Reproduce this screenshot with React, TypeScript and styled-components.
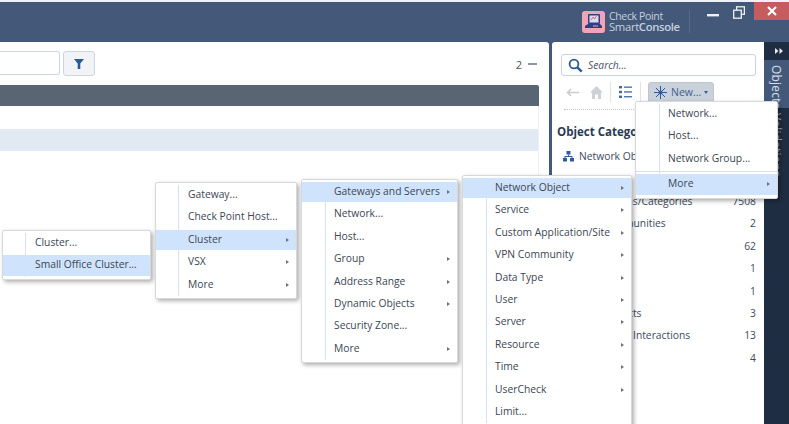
import styled, { createGlobalStyle } from "styled-components";

const GlobalStyle = createGlobalStyle`
  html, body {
    margin: 0;
    padding: 0;
    width: 789px;
    height: 424px;
    overflow: hidden;
    background: #44597a;
  }
  * { box-sizing: border-box; }
`;

const Page = styled.div`
  position: relative;
  width: 789px;
  height: 424px;
  overflow: hidden;
  display: flex;
  flex-direction: column;
  font-family: "Open Sans", "Liberation Sans", sans-serif;
  font-size: 10.3px;
  color: #3c4654;
  background: #44597a;
  border-top: 2px solid #eef1f5;
`;

const TitleBar = styled.header`
  height: 40px;
  flex: none;
  display: flex;
  align-items: flex-start;
  justify-content: flex-end;
`;

const Logo = styled.div`
  display: flex;
  align-items: center;
  gap: 4px;
  height: 23px;
  margin-top: 8px;
  padding-right: 8px;
  border-right: 1px solid #566a8a;
`;

const LogoBadge = styled.div`
  width: 23px;
  height: 22px;
  border-radius: 3px;
  background: #f3a3b6;
  display: flex;
  align-items: center;
  justify-content: center;
`;

const LogoText = styled.div`
  display: flex;
  flex-direction: column;
  width: 72px;
  color: #c6d0de;
  line-height: 10.5px;
  font-size: 10.5px;
  letter-spacing: -0.35px;
  b { font-weight: 600; }
  span:last-child { font-size: 11.3px; }
`;

const WindowButton = styled.button<{ $width: number; $danger?: boolean; $shift?: number }>`
  width: ${(p) => p.$width}px;
  height: 18px;
  padding: ${(p) => p.$shift ?? 0}px 0 0;
  border: 0;
  display: flex;
  align-items: center;
  justify-content: center;
  background: ${(p) => (p.$danger ? "#c55c5e" : "transparent")};
`;

const WindowButtons = styled.div`
  display: flex;
  margin-left: 11px;
`;

const Body = styled.div`
  flex: 1;
  min-height: 0;
  display: flex;
`;

const Main = styled.main`
  width: 549px;
  flex: none;
  background: #fff;
  border-top-right-radius: 3px;
  display: flex;
  flex-direction: column;
`;

const FilterRow = styled.div`
  height: 43px;
  flex: none;
  display: flex;
  align-items: flex-start;
  padding-top: 9px;
  gap: 3px;
`;

const FilterInput = styled.div`
  width: 60px;
  height: 24px;
  border: 1px solid #cfd6df;
  border-left: 0;
  border-radius: 0 3px 3px 0;
`;

const FilterButton = styled.button`
  width: 32px;
  height: 25px;
  padding: 0;
  background: #f1f3f7;
  border: 1px solid #cdd5df;
  border-radius: 3px;
  display: flex;
  align-items: center;
  justify-content: center;
`;

const Counter = styled.div`
  margin-left: auto;
  margin-right: 12px;
  display: flex;
  align-items: center;
  gap: 6px;
  height: 26px;
  font-size: 11px;
  color: #4a5362;
  &::after {
    content: "";
    width: 9px;
    height: 2px;
    background: #8d95a1;
  }
`;

const TableHeader = styled.div`
  height: 21px;
  width: 539px;
  flex: none;
  background: #5a6574;
  border-top-right-radius: 2px;
`;

const TableBody = styled.div`
  width: 539px;
  flex: 1;
  padding-top: 23px;
  border-right: 1px solid #eceff3;
`;

const TableRow = styled.div`
  height: 22px;
  background: #e1e9f3;
`;

const Panel = styled.aside`
  width: 212px;
  margin-left: 3px;
  flex: none;
  background: #fff;
  border-top-left-radius: 3px;
  padding: 12px 8px 0 5px;
  display: flex;
  flex-direction: column;
`;

const SearchBox = styled.div`
  height: 22px;
  margin-left: 4px;
  flex: none;
  border: 1px solid #c9d2dd;
  border-radius: 3px;
  display: flex;
  align-items: center;
  gap: 5px;
  padding-left: 6px;
  font-style: italic;
  color: #4b5563;
`;

const Toolbar = styled.div`
  height: 22px;
  margin-top: 5px;
  margin-left: 9px;
  flex: none;
  display: flex;
  align-items: center;
`;

const ToolDivider = styled.span<{ $left: number; $right: number }>`
  width: 1px;
  height: 20px;
  background: #dfe3e8;
  margin: 0 ${(p) => p.$right}px 0 ${(p) => p.$left}px;
`;

const NewButton = styled.div`
  width: 66px;
  height: 21px;
  background: #c9d1da;
  border: 1px solid #bcc5d0;
  border-radius: 3px;
  display: flex;
  align-items: center;
  gap: 4px;
  padding-left: 5px;
  color: #3e5f8e;
  font-size: 10.5px;
  &::after {
    content: "";
    border-left: 2.5px solid transparent;
    border-right: 2.5px solid transparent;
    border-top: 3px solid #3e5f8e;
    margin-left: -1px;
  }
`;

const DottedRule = styled.div`
  margin: 6px 0 0 7px;
  flex: none;
  border-top: 1px dotted #bcc3cc;
`;

const CategoryHeading = styled.h3`
  margin: 14px 0 0;
  font-size: 11.5px;
  line-height: 16px;
  font-weight: 700;
  color: #2a3a55;
  white-space: nowrap;
`;

const CategoryList = styled.ul`
  list-style: none;
  margin: 5px 0 0;
  padding: 0;
`;

const CategoryRow = styled.li`
  height: 22.4px;
  display: flex;
  align-items: center;
  gap: 5px;
  padding-left: 6px;
  white-space: nowrap;
  color: #3d4a60;
  span:last-child { margin-left: auto; }
`;

const CategoryIcon = styled.span`
  width: 11px;
  height: 11px;
  flex: none;
  display: flex;
`;

const SideRail = styled.div`
  width: 25px;
  flex: none;
  background: #1f2d42;
  display: flex;
  flex-direction: column;
  align-items: stretch;
`;

const RailToggle = styled.div`
  height: 18px;
  flex: none;
  display: flex;
  align-items: center;
  justify-content: center;
  padding-left: 5px;
  color: #e5eaf0;
`;

const RailTab = styled.div<{ $active?: boolean }>`
  writing-mode: vertical-rl;
  flex: none;
  height: ${(p) => (p.$active ? 48 : 70)}px;
  padding: 5px 0 0 0;
  display: flex;
  align-items: center;
  background: ${(p) => (p.$active ? "#44597a" : "transparent")};
  color: ${(p) => (p.$active ? "#d9e0ea" : "#9aa7b8")};
  font-size: 12px;
  letter-spacing: 0.2px;
`;

const Menu = styled.div<{ $left: number; $top: number; $width: number; $gutter?: number }>`
  position: absolute;
  left: ${(p) => p.$left}px;
  top: ${(p) => p.$top}px;
  width: ${(p) => p.$width}px;
  padding: 2px 0 3px;
  background: #fff;
  border: 1px solid #d6d8db;
  border-radius: 2px;
  box-shadow: 2px 2px 4px rgba(0, 0, 0, 0.32);
  &::before {
    content: "";
    position: absolute;
    left: ${(p) => p.$gutter ?? 22}px;
    top: 2px;
    bottom: 2px;
    width: 1px;
    background: #d7e1f0;
  }
`;

const MenuItem = styled.div<{ $active?: boolean; $more?: boolean }>`
  position: relative;
  height: 20.4px;
  margin-bottom: 2px;
  padding-left: 32px;
  line-height: 19px;
  white-space: nowrap;
  color: #3c4654;
  background: ${(p) => (p.$active ? "#cfe4fc" : "transparent")};
  &:last-child { margin-bottom: 0; }
  &::after {
    content: "";
    display: ${(p) => (p.$more ? "block" : "none")};
    position: absolute;
    right: 7px;
    top: 8px;
    border-top: 2.5px solid transparent;
    border-bottom: 2.5px solid transparent;
    border-left: 3px solid #6b7280;
  }
`;

const MenuSeparator = styled.div`
  height: 1px;
  margin: 0 0 2px;
  background: #dcdfe3;
`;

type Entry = { label: string; more?: boolean; active?: boolean };

const level1: Entry[] = [
  { label: "Cluster..." },
  { label: "Small Office Cluster...", active: true },
];

const level2: Entry[] = [
  { label: "Gateway..." },
  { label: "Check Point Host..." },
  { label: "Cluster", more: true, active: true },
  { label: "VSX", more: true },
  { label: "More", more: true },
];

const level3: Entry[] = [
  { label: "Gateways and Servers", more: true, active: true },
  { label: "Network..." },
  { label: "Host..." },
  { label: "Group", more: true },
  { label: "Address Range", more: true },
  { label: "Dynamic Objects", more: true },
  { label: "Security Zone..." },
  { label: "More", more: true },
];

const level4: Entry[] = [
  { label: "Network Object", more: true, active: true },
  { label: "Service", more: true },
  { label: "Custom Application/Site", more: true },
  { label: "VPN Community", more: true },
  { label: "Data Type", more: true },
  { label: "User", more: true },
  { label: "Server", more: true },
  { label: "Resource", more: true },
  { label: "Time", more: true },
  { label: "UserCheck", more: true },
  { label: "Limit..." },
];

const level5: Entry[] = [
  { label: "Network..." },
  { label: "Host..." },
  { label: "Network Group..." },
];

const categories = [
  { label: "Network Objects", count: "" },
  { label: "Services", count: "" },
  { label: "Applications/Categories", count: "7508" },
  { label: "VPN Communities", count: "2" },
  { label: "Data Type", count: "62" },
  { label: "Users", count: "1" },
  { label: "Servers", count: "1" },
  { label: "Time Objects", count: "3" },
  { label: "UserCheck Interactions", count: "13" },
  { label: "Limits", count: "4" },
];

function renderItems(items: Entry[]) {
  return items.map((item) => (
    <MenuItem key={item.label} $active={item.active} $more={item.more}>
      {item.label}
    </MenuItem>
  ));
}

function ComputerIcon() {
  return (
    <svg width="19" height="18" viewBox="0 0 19 18">
      <rect x="4" y="1" width="12" height="10" rx="1" fill="#2f3f86" />
      <rect x="5.5" y="2.5" width="9" height="7" fill="#d9dcf2" />
      <path d="M7 7l2-3 1.5 2 2-3" stroke="#d0526e" strokeWidth="0.8" fill="none" />
      <path d="M1 13l3-2h12l2 2v2H1z" fill="#2f3f86" />
      <rect x="9" y="12.5" width="5" height="1" fill="#f3a3b6" />
    </svg>
  );
}

function NetworkIcon() {
  return (
    <svg width="11" height="11" viewBox="0 0 11 11" fill="#2e5c96">
      <rect x="3.5" y="0" width="4" height="3.5" />
      <rect x="0" y="7" width="4" height="3.5" />
      <rect x="7" y="7" width="4" height="3.5" />
      <path d="M5 3.5h1V5h3.5v2h-1V6h-6v1h-1V5H5z" />
    </svg>
  );
}

export default function App() {
  return (
    <Page>
      <GlobalStyle />
      <TitleBar>
        <Logo>
          <LogoBadge>
            <ComputerIcon />
          </LogoBadge>
          <LogoText>
            <span>Check Point</span>
            <span>
              Smart<b>Console</b>
            </span>
          </LogoText>
        </Logo>
        <WindowButtons>
          <WindowButton $width={23}>
            <svg width="12" height="3" viewBox="0 0 12 3" style={{ marginTop: 9 }}>
              <rect width="12" height="2.4" fill="#eef2f6" />
            </svg>
          </WindowButton>
          <WindowButton $width={30} $shift={3}>
            <svg width="12" height="13" viewBox="0 0 12 13" fill="none" stroke="#eef2f6" strokeWidth="1.3">
              <rect x="3.6" y="0.8" width="7.8" height="7.5" />
              <rect x="0.7" y="4.2" width="7.6" height="8" fill="#44597a" />
            </svg>
          </WindowButton>
          <WindowButton $width={35} $danger>
            <svg width="10" height="10" viewBox="0 0 10 10" stroke="#fff" strokeWidth="2.2">
              <path d="M1 1l8 8M9 1l-8 8" />
            </svg>
          </WindowButton>
        </WindowButtons>
      </TitleBar>
      <Body>
        <Main>
          <FilterRow>
            <FilterInput />
            <FilterButton>
              <svg width="12" height="12" viewBox="0 0 12 12" fill="#2d5a94">
                <path d="M1 1h10L7.3 5.6V11H4.7V5.6z" />
              </svg>
            </FilterButton>
            <Counter>2</Counter>
          </FilterRow>
          <TableHeader />
          <TableBody>
            <TableRow />
          </TableBody>
        </Main>
        <Panel>
          <SearchBox>
            <svg width="15" height="15" viewBox="0 0 15 15" fill="none" stroke="#2d5a94">
              <circle cx="6" cy="6" r="4.4" strokeWidth="1.8" />
              <path d="M9.3 9.3l4.4 4.4" strokeWidth="2.4" />
            </svg>
            Search...
          </SearchBox>
          <Toolbar>
            <svg width="13" height="9" viewBox="0 0 13 9" fill="none" stroke="#c9ccd0" strokeWidth="1.6">
              <path d="M13 4.5H2M5 1L1.5 4.5 5 8" />
            </svg>
            <svg width="13" height="13" viewBox="0 0 13 13" fill="#cfd1d4" style={{ marginLeft: 11 }}>
              <path d="M6.5 0L13 6.5h-2V13H8V8.5H5V13H2V6.5H0z" />
            </svg>
            <ToolDivider $left={7} $right={8} />
            <svg width="13" height="12" viewBox="0 0 13 12" fill="#3b6aa6">
              <rect x="0" y="0" width="3" height="2.4" />
              <rect x="0" y="4.8" width="3" height="2.4" />
              <rect x="0" y="9.6" width="3" height="2.4" />
              <rect x="5" y="0.5" width="8" height="1.3" />
              <rect x="5" y="5.3" width="8" height="1.3" />
              <rect x="5" y="10.1" width="8" height="1.3" />
            </svg>
            <ToolDivider $left={8} $right={7} />
            <NewButton>
              <svg width="13" height="13" viewBox="0 0 13 13" stroke="#2d5a94" strokeWidth="1" fill="#2d5a94">
                <circle cx="6.5" cy="6.5" r="1.6" />
                <path d="M6.5 0v13M0 6.5h13M2 2l9 9M11 2l-9 9" />
              </svg>
              New...
            </NewButton>
          </Toolbar>
          <DottedRule />
          <CategoryHeading>Object Categories</CategoryHeading>
          <CategoryList>
            {categories.map((c, i) => (
              <CategoryRow key={c.label}>
                <CategoryIcon>{i === 0 && <NetworkIcon />}</CategoryIcon>
                <span>{c.label}</span>
                <span>{c.count}</span>
              </CategoryRow>
            ))}
          </CategoryList>
        </Panel>
        <SideRail>
          <RailToggle>
            <svg width="8" height="6" viewBox="0 0 8 6" fill="currentColor">
              <path d="M0 0l3.5 3L0 6zM4.5 0L8 3 4.5 6z" />
            </svg>
          </RailToggle>
          <RailTab $active>Objects</RailTab>
          <RailTab>Validations</RailTab>
        </SideRail>
      </Body>

      <Menu $left={2} $top={228} $width={149}>
        {renderItems(level1)}
      </Menu>
      <Menu $left={155} $top={180} $width={142}>
        {renderItems(level2)}
      </Menu>
      <Menu $left={301} $top={177} $width={157} $gutter={23}>
        {renderItems(level3)}
      </Menu>
      <Menu $left={462} $top={173} $width={170} $gutter={23}>
        {renderItems(level4)}
      </Menu>
      <Menu $left={635} $top={99} $width={143} $gutter={23}>
        {renderItems(level5)}
        <MenuSeparator />
        <MenuItem $active $more>
          More
        </MenuItem>
      </Menu>
    </Page>
  );
}
